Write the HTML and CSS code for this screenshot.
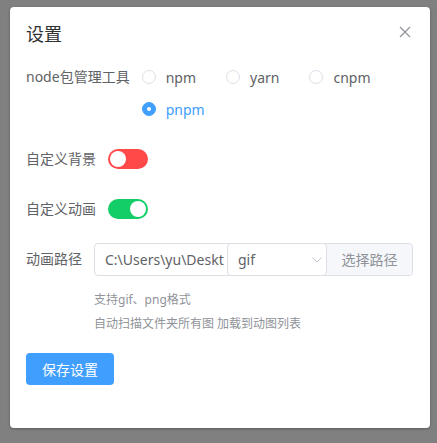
FILE: index.html
```html
<!DOCTYPE html>
<html lang="zh-CN">
<head>
    <meta charset="UTF-8">
    <title>设置</title>
    <link rel="stylesheet" href="styles.css">
</head>
<body>
    <div class="dialog">
        <div class="dialog-header">
            <span class="dialog-title">设置</span>
            <svg class="dialog-close" width="12" height="12" viewBox="0 0 12 12">
                <path d="M1 1 L11 11 M11 1 L1 11" stroke="#909399" stroke-width="1.2" fill="none"/>
            </svg>
        </div>

        <div class="dialog-body">
            <div class="form-item">
                <label class="form-label">node包管理工具</label>
                <div class="radio-group">
                    <span class="radio"><span class="radio-inner"></span><span class="radio-label">npm</span></span>
                    <span class="radio"><span class="radio-inner"></span><span class="radio-label">yarn</span></span>
                    <span class="radio"><span class="radio-inner"></span><span class="radio-label">cnpm</span></span>
                    <span class="radio checked"><span class="radio-inner"></span><span class="radio-label">pnpm</span></span>
                </div>
            </div>

            <div class="form-item">
                <label class="form-label">自定义背景</label>
                <span class="switch off"><span class="switch-knob"></span></span>
            </div>

            <div class="form-item">
                <label class="form-label">自定义动画</label>
                <span class="switch on"><span class="switch-knob"></span></span>
            </div>

            <div class="form-item path-item">
                <label class="form-label">动画路径</label>
                <div class="path-content">
                    <div class="input-group">
                        <div class="input-text">C:\Users\yu\Deskt</div>
                        <div class="select">
                            <span>gif</span>
                            <svg class="select-arrow" width="10" height="6" viewBox="0 0 10 6">
                                <path d="M0.5 0.5 L5 5 L9.5 0.5" stroke="#c0c4cc" stroke-width="1" fill="none"/>
                            </svg>
                        </div>
                        <div class="input-append">选择路径</div>
                    </div>
                    <div class="help">
                        <p>支持gif、png格式</p>
                        <p>自动扫描文件夹所有图 加载到动图列表</p>
                    </div>
                </div>
            </div>

            <button class="btn-primary">保存设置</button>
        </div>
    </div>
</body>
</html>
```

FILE: styles.css
```css
* {
    margin: 0;
    padding: 0;
    box-sizing: border-box;
    font-family: 'Noto Sans', 'Noto Sans CJK SC', sans-serif;
}

body {
    background: #808080;
    width: 437px;
    height: 443px;
    padding: 7px 7px 0 10px;
}

.dialog {
    background: #fff;
    width: 420px;
    height: 421px;
    border-radius: 4px;
    box-shadow: 0 1px 3px rgba(0, 0, 0, 0.3);
    padding: 0 16px;
}

.dialog-header {
    display: flex;
    align-items: center;
    justify-content: space-between;
    height: 52px;
    padding-top: 2px;
}

.dialog-title {
    font-size: 18px;
    color: #303133;
    line-height: 24px;
}

.dialog-close {
    margin-right: 3px;
    margin-top: -4px;
}

.dialog-body {
    padding-top: 2px;
}

.form-item {
    display: flex;
    align-items: flex-start;
    margin-bottom: 18px;
}

.form-label {
    font-size: 14px;
    color: #606266;
    line-height: 32px;
    padding-right: 12px;
    white-space: nowrap;
}

.radio-group {
    display: flex;
    flex-wrap: wrap;
    flex: 1;
}

.radio {
    display: flex;
    align-items: center;
    height: 32px;
    margin-right: 30px;
    font-size: 14px;
    color: #606266;
}

.radio-inner {
    width: 14px;
    height: 14px;
    border: 1px solid #dcdfe6;
    border-radius: 50%;
    background: #fff;
    position: relative;
}

.radio-label {
    padding-left: 10px;
}

.radio.checked .radio-inner {
    background: #409eff;
    border-color: #409eff;
}

.radio.checked .radio-inner::after {
    content: '';
    position: absolute;
    width: 4px;
    height: 4px;
    border-radius: 50%;
    background: #fff;
    left: 4px;
    top: 4px;
}

.radio.checked .radio-label {
    color: #409eff;
}

.switch {
    display: inline-block;
    width: 40px;
    height: 20px;
    border-radius: 10px;
    margin-top: 6px;
    position: relative;
}

.switch.off {
    background: #ff4949;
}

.switch.on {
    background: #13ce66;
}

.switch-knob {
    position: absolute;
    top: 2px;
    width: 16px;
    height: 16px;
    border-radius: 50%;
    background: #fff;
}

.switch.off .switch-knob {
    left: 2px;
}

.switch.on .switch-knob {
    left: 22px;
}

.path-content {
    flex: 1;
}

.input-group {
    display: flex;
    height: 33px;
    width: 319px;
    border: 1px solid #dcdfe6;
    border-radius: 4px;
    font-size: 14px;
}

.input-text {
    width: 132px;
    padding-left: 10px;
    line-height: 31px;
    color: #606266;
    overflow: hidden;
    white-space: nowrap;
}

.select {
    width: 100px;
    margin: -1px 0;
    border: 1px solid #dcdfe6;
    border-radius: 4px;
    display: flex;
    align-items: center;
    justify-content: space-between;
    padding: 0 4px 0 10px;
    color: #606266;
    background: #fff;
}

.select-arrow {
    margin-top: 1px;
}

.input-append {
    flex: 1;
    background: #f5f7fa;
    color: #909399;
    line-height: 31px;
    text-align: center;
    border-radius: 0 4px 4px 0;
}

.help {
    margin-top: 12px;
    font-size: 12px;
    color: #909399;
    line-height: 24px;
}

.btn-primary {
    margin-top: -1px;
    width: 88px;
    height: 32px;
    background: #409eff;
    color: #fff;
    border: none;
    border-radius: 4px;
    font-size: 14px;
}
```
